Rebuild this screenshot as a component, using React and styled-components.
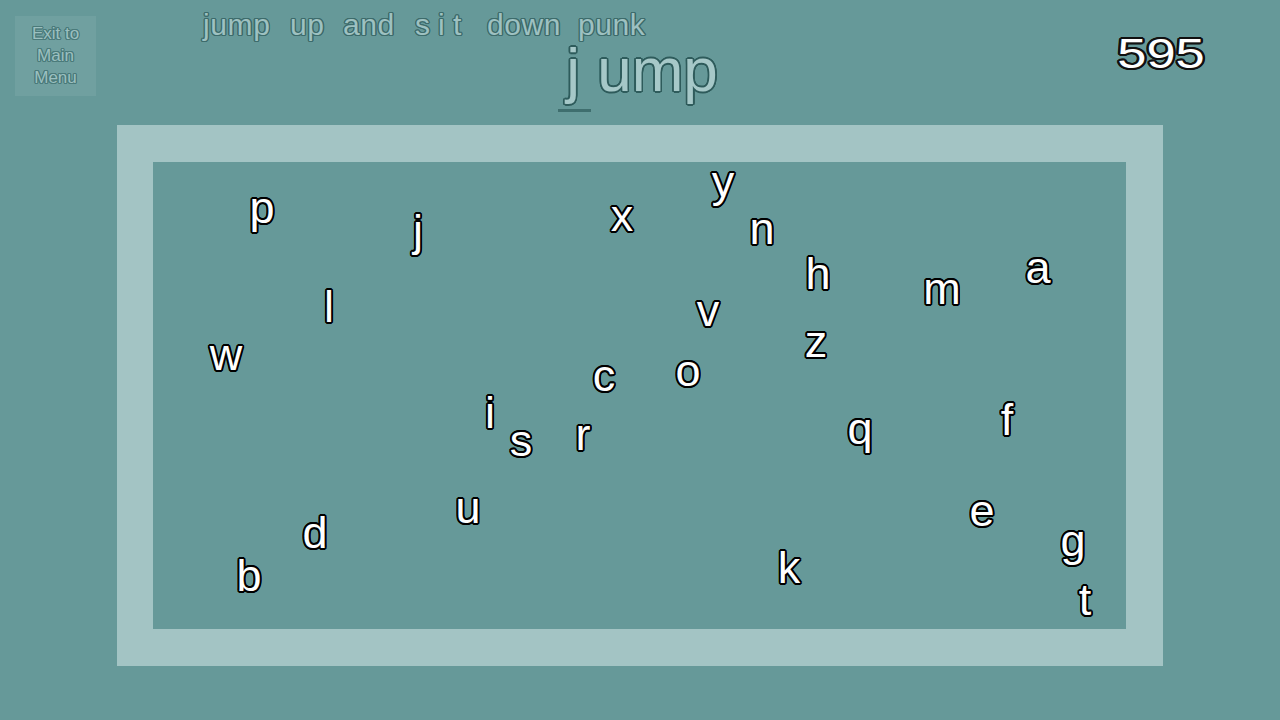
import React from "react";
import styled, { createGlobalStyle } from "styled-components";

const outline = (w, c) => {
  const parts = [];
  const steps = 16;
  for (let i = 0; i < steps; i++) {
    const a = (i / steps) * Math.PI * 2;
    parts.push(`${(Math.cos(a) * w).toFixed(2)}px ${(Math.sin(a) * w).toFixed(2)}px 0 ${c}`);
  }
  return parts.join(", ");
};

const Global = createGlobalStyle`
  html, body { margin: 0; padding: 0; background: #669999; }
  body { font-family: "Liberation Sans", Arial, sans-serif; }
`;

const Page = styled.div`
  width: 1280px;
  height: 720px;
  background: #669999;
  display: flex;
  flex-direction: column;
  align-items: center;
  overflow: hidden;
  font-family: "Liberation Sans", Arial, sans-serif;
`;

const Header = styled.header`
  width: 100%;
  height: 125px;
  display: grid;
  grid-template-columns: 200px 1fr 200px;
  align-items: start;
`;

const ExitButton = styled.button`
  margin: 16px 0 0 15px;
  width: 81px;
  height: 80px;
  border: none;
  padding: 0;
  background: rgba(255, 255, 255, 0.07);
  display: flex;
  align-items: center;
  justify-content: center;
  font-family: "Liberation Sans", Arial, sans-serif;
  font-size: 17px;
  line-height: 22px;
  color: #9cc0c0;
  text-shadow: ${outline(1, "#4a7a7a")};
  text-align: center;
  cursor: pointer;
`;

const Middle = styled.div`
  display: flex;
  flex-direction: column;
`;

const Sentence = styled.div`
  margin: 9px 0 0 3px;
  display: flex;
  font-size: 30px;
  line-height: 31px;
  letter-spacing: 0.6px;
  white-space: pre;
  color: #9ec1c1;
  text-shadow: ${outline(1.2, "#3d6b6b")};
`;

const Token = styled.span`
  flex: none;
  width: ${(p) => (p.$w ? `${p.$w}px` : "auto")};
`;

const Word = styled.div`
  align-self: center;
  margin: 0 0 0 4px;
  font-size: 62px;
  line-height: 60px;
  white-space: pre;
  color: #a6c8c8;
  text-shadow: ${outline(1.6, "#2f5c5c")};
`;

const Current = styled.span`
  position: relative;
  &::after {
    content: "";
    position: absolute;
    left: -8px;
    width: 33px;
    bottom: -8px;
    height: 3px;
    background: #3f6e6e;
  }
`;

const Score = styled.div`
  justify-self: end;
  margin: 27px 75px 0 0;
  font-size: 43px;
  line-height: 52px;
  color: #ffffff;
  text-shadow: ${outline(2, "#111")};
  transform: scaleX(1.22);
  transform-origin: right center;
`;

const Frame = styled.div`
  width: 1046px;
  height: 541px;
  box-sizing: border-box;
  border: 37px solid #a3c4c4;
  border-left-width: 36px;
  background: #669999;
`;

const Canvas = styled.div`
  position: relative;
  width: 100%;
  height: 100%;
`;

const Letter = styled.span`
  position: absolute;
  transform: translateX(-50%);
  font-size: 45px;
  line-height: 45px;
  color: #ffffff;
  text-shadow: ${outline(1.8, "#000")};
`;

// token, width up to the next token's start
const tokens = [
  ["jump", 87],
  ["up", 53],
  ["and", 72],
  ["s", 23],
  ["i", 15],
  ["t", 34],
  ["down", 91],
  ["punk", 0],
];

// [char, cx, visual center y, kind]
const raw = [
  ["p", 262, 211, "d"],
  ["j", 418, 233, "j"],
  ["x", 622, 218, "x"],
  ["y", 723, 185, "d"],
  ["n", 762, 231, "x"],
  ["h", 818, 272, "a"],
  ["a", 1038, 270, "x"],
  ["m", 942, 291, "x"],
  ["l", 329, 305, "a"],
  ["v", 708, 313, "x"],
  ["z", 816, 344, "x"],
  ["w", 226, 357, "x"],
  ["c", 604, 378, "x"],
  ["o", 688, 373, "x"],
  ["i", 490, 411, "a"],
  ["s", 521, 443, "x"],
  ["r", 583, 437, "x"],
  ["q", 860, 432, "d"],
  ["f", 1007, 418, "a"],
  ["u", 468, 510, "x"],
  ["d", 315, 531, "a"],
  ["e", 982, 513, "x"],
  ["g", 1073, 544, "d"],
  ["b", 249, 574, "a"],
  ["k", 789, 566, "a"],
  ["t", 1085, 598, "a"],
];

const offsets = { x: 12.5, a: 17, d: 11.5, j: 12.5 };

const letters = raw.map(([c, cx, cy, k]) => {
  const baseline = cy + offsets[k];
  return { c, left: cx - 153, top: baseline - 162 - 38 };
});

export default function App() {
  return (
    <>
      <Global />
      <Page>
        <Header>
          <ExitButton>
            Exit to
            <br />
            Main
            <br />
            Menu
          </ExitButton>
          <Middle>
            <Sentence>
              {tokens.map(([t, w]) => (
                <Token key={t} $w={w}>
                  {t}
                </Token>
              ))}
            </Sentence>
            <Word>
              <Current>j</Current>
              {" ump"}
            </Word>
          </Middle>
          <Score>595</Score>
        </Header>
        <Frame>
          <Canvas>
            {letters.map((l) => (
              <Letter key={l.c} style={{ left: l.left, top: l.top }}>
                {l.c}
              </Letter>
            ))}
          </Canvas>
        </Frame>
      </Page>
    </>
  );
}
